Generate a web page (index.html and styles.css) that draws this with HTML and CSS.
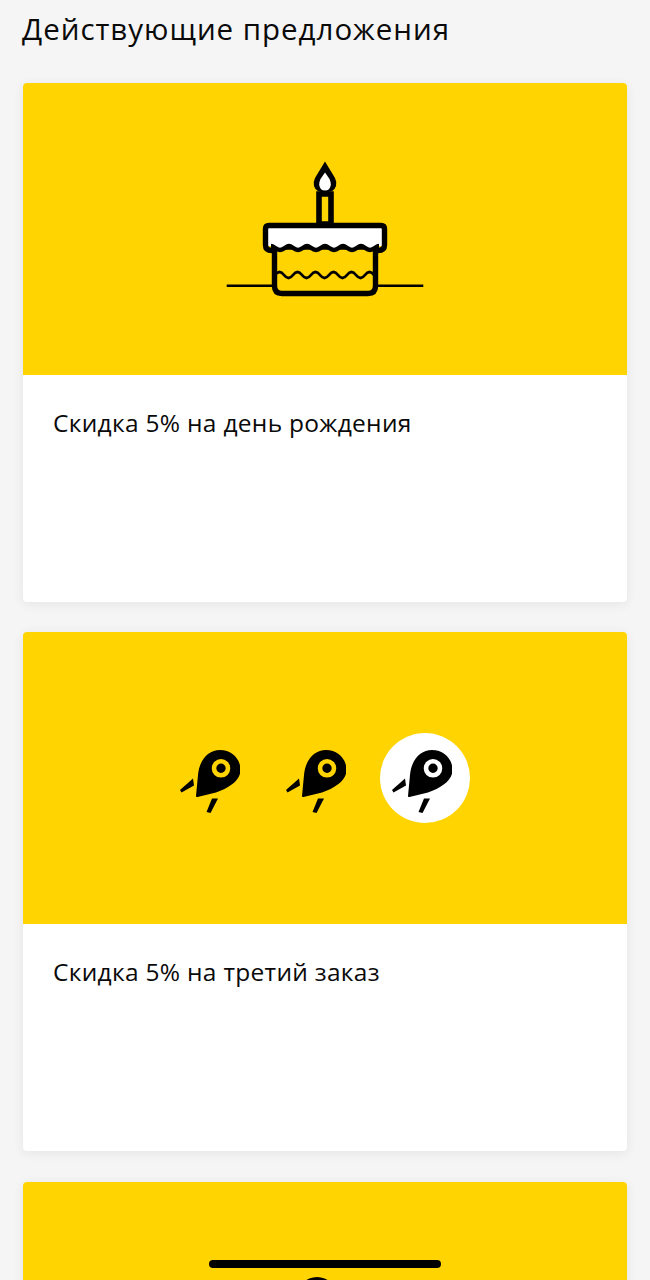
FILE: index.html
```html
<!DOCTYPE html>
<html lang="ru">
<head>
<meta charset="utf-8">
<title>Действующие предложения</title>
<link rel="stylesheet" href="styles.css">
</head>
<body>
<svg class="defs" width="0" height="0" aria-hidden="true">
  <symbol id="pin" viewBox="0 0 60 90">
    <path d="M16.7 64C16.2 64 16 63.6 16 63L18 42C19.3 27 28 17 40 17C52 17 60.5 26 60.5 37C60.5 47 50 54.5 36 59.5L17.5 64Z" fill="#000"/>
    <circle cx="41" cy="35.3" r="7" fill="#000" stroke="currentColor" stroke-width="4.6"/>
    <path d="M0 57L13 45.5L14 52.5L1.5 59.5Z" fill="#000"/>
    <path d="M32 65.5H38L30.5 80L26.5 79Z" fill="#000"/>
  </symbol>
</svg>
<main class="page">
  <h1 class="title">Действующие предложения</h1>
  <section class="card">
    <div class="banner">
      <svg class="cake" viewBox="225 159 200 140" width="200" height="140">
        <path d="M226.7 285.7H423.3" fill="none" stroke="#000" stroke-width="2.6"/>
        <path d="M274.5 247V286Q274.5 293.5 282 293.5H368Q375.5 293.5 375.5 286V247Z" fill="#ffd400" stroke="#000" stroke-width="5.4"/>
        <path d="M275 275q4.5 -6 9 0t9 0t9 0t9 0t9 0t9 0t9 0t9 0t9 0t9 0t9 0" fill="none" stroke="#000" stroke-width="2.8"/>
        <path d="M319 224V194H331V224Z" fill="#ffd400" stroke="#000" stroke-width="5.6"/>
        <path d="M325 161.5L335 178Q337 182 336 186Q334 192.5 325 192.5Q316 192.5 314 186Q313 182 315 178Z" fill="#000"/>
        <path d="M325 172.5L329.5 179Q331 182 330.8 185Q330 190.5 325 190.5Q320 190.5 319.2 185Q319 182 320.5 179Z" fill="#fff"/>
        <path d="M268 228V246H271c3 0 5 4 9 4c4 0 6-4 9-4c3 0 5 4 9 4c4 0 6-4 9-4c3 0 5 4 9 4c4 0 6-4 9-4c3 0 5 4 9 4c4 0 6-4 9-4c3 0 5 4 9 4c4 0 6-4 9-4c3 0 5 4 9 4c4 0 6-4 9-4H382V228Z" fill="#fff"/>
        <path d="M271 246c3 0 5 4 9 4c4 0 6-4 9-4c3 0 5 4 9 4c4 0 6-4 9-4c3 0 5 4 9 4c4 0 6-4 9-4c3 0 5 4 9 4c4 0 6-4 9-4c3 0 5 4 9 4c4 0 6-4 9-4c3 0 5 4 9 4c4 0 6-4 9-4" fill="none" stroke="#000" stroke-width="4.4"/>
        <path d="M272 250.5Q265.5 250.5 265.5 245V229Q265.5 225.5 269 225.5H381Q384.5 225.5 384.5 229V245Q384.5 250.5 378 250.5" fill="none" stroke="#000" stroke-width="5.4"/>
      </svg>
    </div>
    <p class="offer">Скидка 5% на день рождения</p>
  </section>
  <section class="card">
    <div class="banner">
      <div class="pins">
        <svg class="pin pin-yellow"><use href="#pin"/></svg>
        <svg class="pin pin-yellow"><use href="#pin"/></svg>
        <div class="pin-badge"><svg class="pin pin-white"><use href="#pin"/></svg></div>
      </div>
    </div>
    <p class="offer">Скидка 5% на третий заказ</p>
  </section>
  <section class="card">
    <div class="banner banner-top">
      <svg class="dot" viewBox="0 0 40 40" width="40" height="40"><circle cx="20" cy="20" r="20" fill="#000"/></svg>
    </div>
    <p class="offer"></p>
  </section>
</main>
<div class="home-indicator"></div>
</body>
</html>
```
FILE: styles.css
```css
html, body {
  margin: 0;
  height: 1280px;
  overflow: hidden;
  background: #f5f5f5;
}
.defs {
  position: absolute;
}
.page {
  display: flex;
  flex-direction: column;
  padding: 0 23px;
  font-family: "Open Sans", "Noto Sans", sans-serif;
  color: #0a0a0a;
}
.title {
  margin: 0 0 0 -1px;
  height: 83px;
  box-sizing: border-box;
  padding-top: 9px;
  font-size: 29.5px;
  line-height: 40px;
  font-weight: 400;
  letter-spacing: 0.97px;
  white-space: nowrap;
}
.card {
  display: flex;
  flex-direction: column;
  height: 519px;
  margin-bottom: 30.4px;
  flex: none;
  background: #fff;
  border-radius: 4px;
  overflow: hidden;
  box-shadow: 0 2px 12px rgba(0, 0, 0, 0.07);
}
.banner {
  display: flex;
  align-items: center;
  justify-content: center;
  height: 292px;
  flex: none;
  background: #ffd400;
}
.banner-top {
  align-items: flex-start;
  padding: 95px 17px 0 0;
  box-sizing: border-box;
}
.cake, .dot {
  display: block;
}
.offer {
  margin: 0;
  padding: 31px 30px 0;
  font-size: 24.5px;
  line-height: 34px;
  letter-spacing: 0.3px;
}
.pins {
  display: flex;
  align-items: center;
  gap: 46px;
}
.pin {
  display: block;
  width: 60px;
  height: 90px;
}
.pin-yellow {
  color: #ffd400;
}
.pin-white {
  color: #fff;
}
.pin-badge {
  display: flex;
  width: 90px;
  height: 90px;
  margin-left: -12px;
  padding-left: 12px;
  box-sizing: border-box;
  border-radius: 50%;
  background: #fff;
}
.home-indicator {
  position: fixed;
  left: 209px;
  top: 1260px;
  width: 232px;
  height: 8px;
  border-radius: 4px;
  background: #000;
}
```
